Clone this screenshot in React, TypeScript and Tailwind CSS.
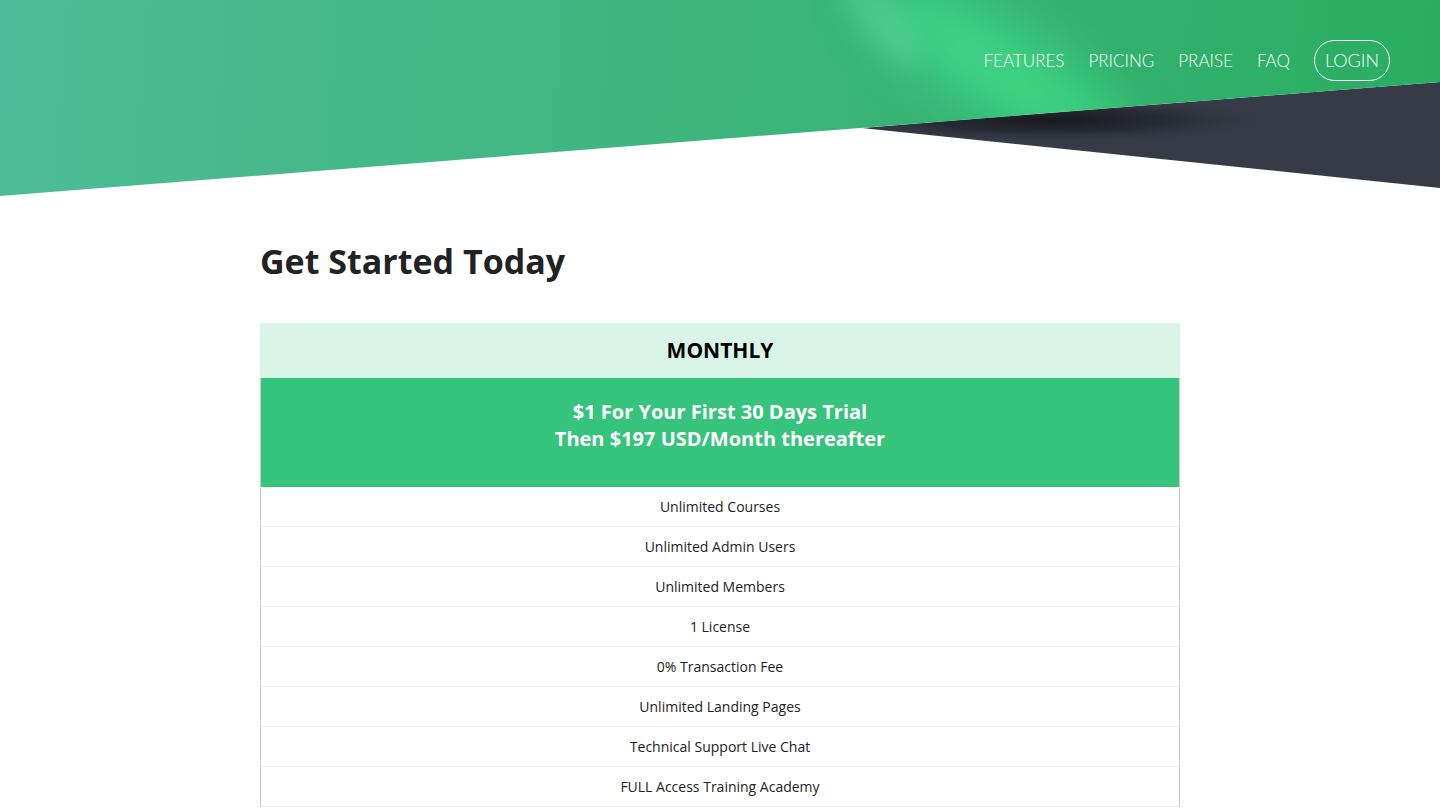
import React from "react";

const FEATURES = [
  "Unlimited Courses",
  "Unlimited Admin Users",
  "Unlimited Members",
  "1 License",
  "0% Transaction Fee",
  "Unlimited Landing Pages",
  "Technical Support Live Chat",
  "FULL Access Training Academy",
];

const NAV = ["FEATURES", "PRICING", "PRAISE", "FAQ"];

function HeroShape() {
  return (
    <svg className="absolute inset-0 h-full w-full" viewBox="0 0 1440 196" preserveAspectRatio="none">
      <defs>
        <linearGradient id="g-base" x1="0" y1="0" x2="1440" y2="120" gradientUnits="userSpaceOnUse">
          <stop offset="0" stopColor="#4ebc98" />
          <stop offset="0.5" stopColor="#3db57c" />
          <stop offset="1" stopColor="#29ae61" />
        </linearGradient>
        <radialGradient id="g-shadow" cx="0.5" cy="0.5" r="0.5">
          <stop offset="0" stopColor="#15171c" stopOpacity="0.95" />
          <stop offset="0.5" stopColor="#1c1f26" stopOpacity="0.6" />
          <stop offset="1" stopColor="#363b47" stopOpacity="0" />
        </radialGradient>
        <clipPath id="clip-green">
          <polygon points="0,0 1440,0 1440,82 0,196" />
        </clipPath>
        <clipPath id="clip-dark">
          <polygon points="862,128 1440,82 1440,188" />
        </clipPath>
        <filter id="blur-lg" filterUnits="userSpaceOnUse" x="0" y="-200" width="1440" height="600">
          <feGaussianBlur stdDeviation="28" />
        </filter>
        <filter id="blur-sm" filterUnits="userSpaceOnUse" x="0" y="-200" width="1440" height="600">
          <feGaussianBlur stdDeviation="12" />
        </filter>
      </defs>

      {/* dark wedge under the green */}
      <polygon points="862,128 1440,82 1440,188" fill="#363b47" />
      <g clipPath="url(#clip-dark)">
        <ellipse cx="1050" cy="120" rx="230" ry="24" fill="url(#g-shadow)" />
      </g>

      {/* green band */}
      <polygon points="0,0 1440,0 1440,82 0,196" fill="url(#g-base)" />
      <g clipPath="url(#clip-green)">
        <ellipse
          cx="1000"
          cy="70"
          rx="40"
          ry="150"
          fill="#43e28c"
          opacity="0.75"
          filter="url(#blur-lg)"
          transform="rotate(-58 1000 70)"
        />
        <ellipse
          cx="880"
          cy="20"
          rx="22"
          ry="60"
          fill="#5fd49a"
          opacity="0.45"
          filter="url(#blur-sm)"
          transform="rotate(-40 880 20)"
        />
      </g>
    </svg>
  );
}

export default function App() {
  return (
    <div className="min-h-screen bg-white" style={{ fontFamily: '"Open Sans", "Liberation Sans", sans-serif' }}>
      <header className="relative h-[196px] w-full overflow-hidden">
        <HeroShape />
        <nav
          className="relative flex items-center justify-end gap-6 pr-[50px] pt-10 text-[17px] font-light text-white"
          style={{ fontFamily: 'Lato, "Liberation Sans", sans-serif' }}
        >
          {NAV.map((n) => (
            <a key={n} href="#" className="leading-[41px]">
              {n}
            </a>
          ))}
          <a href="#" className="flex h-[41px] items-center rounded-full border border-white px-[10px] text-[18px]">
            LOGIN
          </a>
        </nav>
      </header>

      <main className="mx-auto w-[920px]">
        <h1 className="mt-[45px] text-[34px] font-bold leading-[1.2] text-[#222]">Get Started Today</h1>

        <section className="mt-[41px]">
          <div className="flex h-[55px] items-center justify-center bg-[#d9f5e8] text-[21px] font-bold text-black">
            MONTHLY
          </div>
          <div className="border-x border-[#cccccc]">
            <div className="bg-[#36c47c] pb-[35px] pt-5 text-center text-[20px] font-bold leading-[27px] text-white">
              <p>$1 For Your First 30 Days Trial</p>
              <p>Then $197 USD/Month thereafter</p>
            </div>
            {FEATURES.map((f) => (
              <div
                key={f}
                className="flex h-10 items-center justify-center border-b border-[#eeeeee] text-[14px] text-[#222]"
              >
                {f}
              </div>
            ))}
          </div>
        </section>
      </main>
    </div>
  );
}
